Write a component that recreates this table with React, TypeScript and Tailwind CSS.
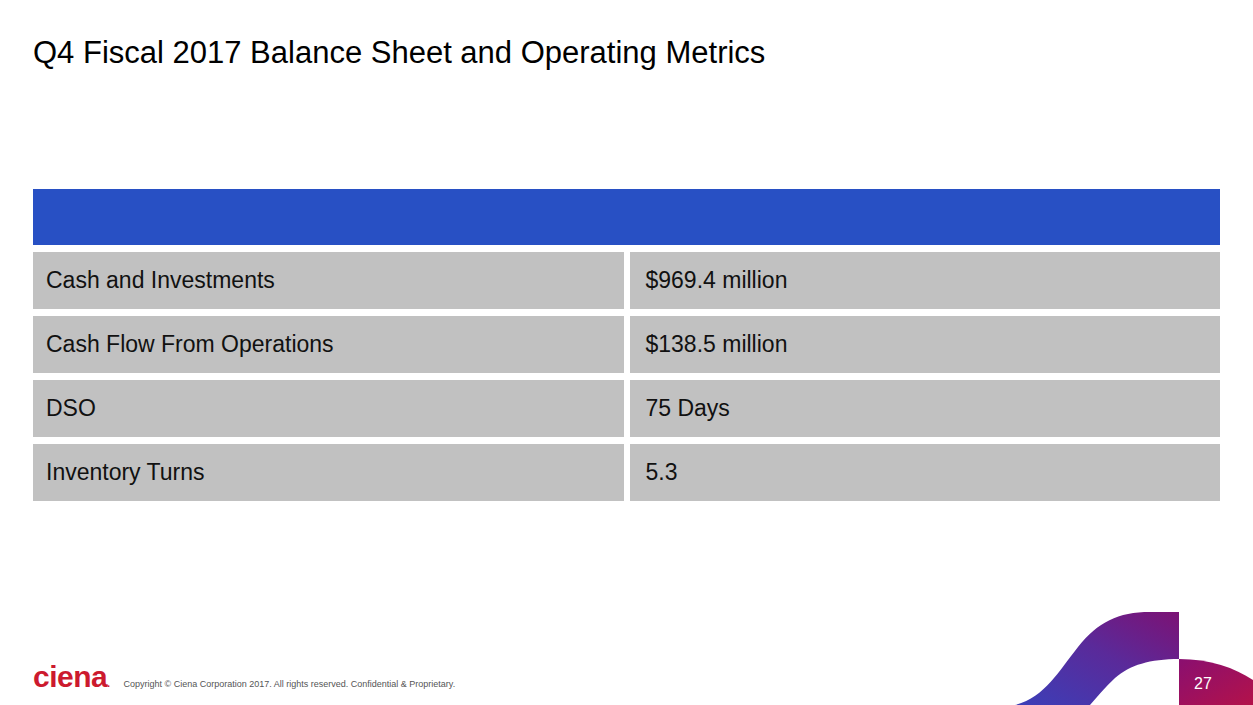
const rows = [
  { label: "Cash and Investments", value: "$969.4 million" },
  { label: "Cash Flow From Operations", value: "$138.5 million" },
  { label: "DSO", value: "75 Days" },
  { label: "Inventory Turns", value: "5.3" },
];

function Swoosh() {
  return (
    <svg
      className="absolute right-0 bottom-0"
      width="253"
      height="105"
      viewBox="0 0 253 105"
    >
      <defs>
        <linearGradient id="band" x1="0" y1="1" x2="1" y2="0">
          <stop offset="0%" stopColor="#3b3fb8" />
          <stop offset="55%" stopColor="#5a2a9a" />
          <stop offset="100%" stopColor="#7c1274" />
        </linearGradient>
        <linearGradient id="tail" x1="0" y1="0" x2="1" y2="1">
          <stop offset="0%" stopColor="#8a0f70" />
          <stop offset="100%" stopColor="#b3124a" />
        </linearGradient>
      </defs>
      <path
        d="M15,105 C45,97 58,72 78,47 C98,22 118,12 150,12 L179,12 L179,59 C150,59 130,65 115,78 C105,87 97,97 90,105 Z"
        fill="url(#band)"
      />
      <path d="M179,59 C210,59 235,68 253,80 L253,105 L179,105 Z" fill="url(#tail)" />
    </svg>
  );
}

export default function App() {
  return (
    <div className="relative w-full h-[705px] overflow-hidden bg-white flex flex-col font-['Liberation_Sans',Arial,sans-serif]">
      {/* Title */}
      <h1 className="mt-[37px] pl-[33px] text-[31px] leading-none text-black font-normal">
        Q4 Fiscal 2017 Balance Sheet and Operating Metrics
      </h1>

      {/* Metrics table */}
      <div className="mt-[121px] mx-[33px] flex flex-col gap-[7px]">
        <div className="h-[56px] bg-[#2850c4]" />
        {rows.map((r) => (
          <div key={r.label} className="grid grid-cols-2 gap-[6px] h-[57px]">
            <div className="bg-[#c1c1c1] flex items-center pl-[13px] text-[23px] text-[#111]">
              {r.label}
            </div>
            <div className="bg-[#c1c1c1] flex items-center pl-[16px] text-[23px] text-[#111]">
              {r.value}
            </div>
          </div>
        ))}
      </div>

      {/* Footer */}
      <div className="mt-auto pb-[13px] pl-[33px] flex items-baseline gap-[14px]">
        <span className="text-[30px] leading-none font-bold tracking-[-0.5px] text-[#cc1a2e]">
          ciena<span className="text-[10px]">.</span>
        </span>
        <span className="text-[9px] text-[#555]">
          Copyright © Ciena Corporation 2017. All rights reserved. Confidential &amp; Proprietary.
        </span>
      </div>

      <Swoosh />
      <span className="absolute left-[1194px] top-[676px] text-[16px] leading-none text-white">27</span>
    </div>
  );
}
